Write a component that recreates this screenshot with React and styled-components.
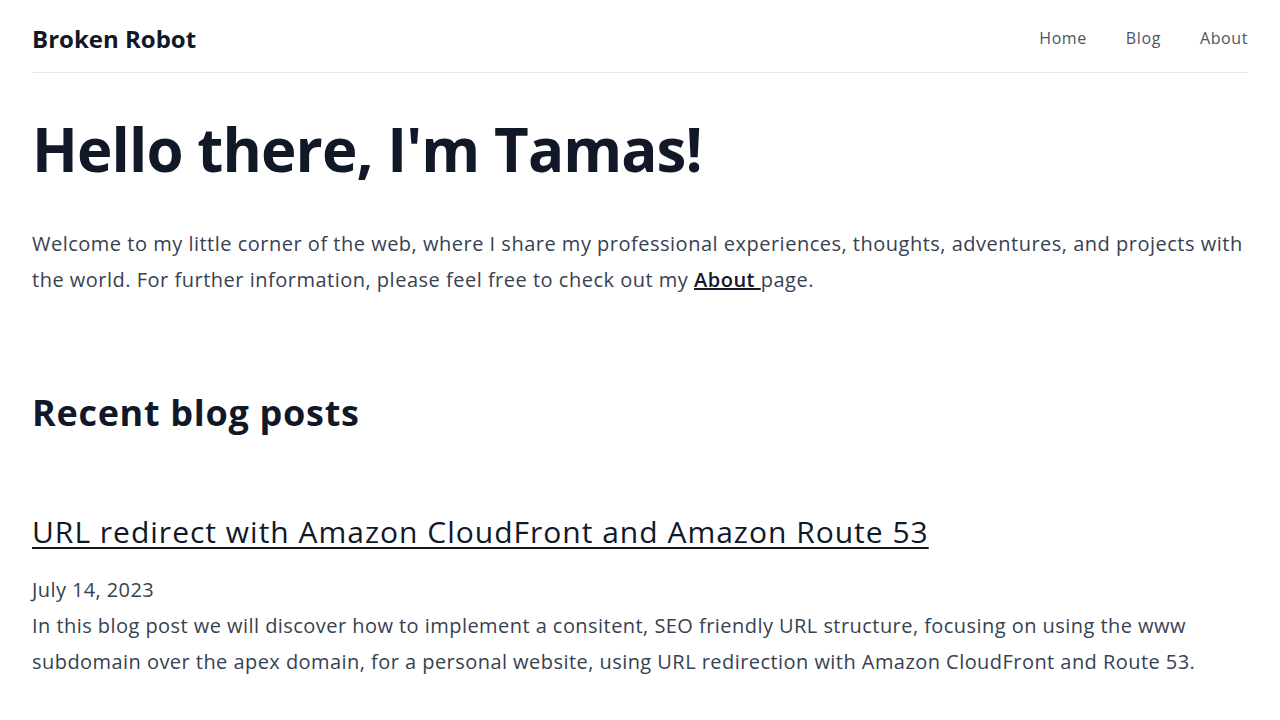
import React from 'react'
import styled, { createGlobalStyle } from 'styled-components'

const GlobalStyle = createGlobalStyle`
  html, body {
    margin: 0;
    padding: 0;
    background: #ffffff;
  }
  body {
    font-family: 'Open Sans', 'Liberation Sans', sans-serif;
    color: #374151;
  }
`

const Page = styled.div`
  padding: 0 32px;
`

const Header = styled.header`
  height: 73px;
  display: flex;
  align-items: center;
  justify-content: space-between;
  border-bottom: 1px solid #e5e7eb;
  padding-top: 4px;
  box-sizing: border-box;
`

const Logo = styled.a`
  font-size: 24px;
  font-weight: 700;
  color: #111827;
  text-decoration: none;
  letter-spacing: 0px;
`

const Nav = styled.nav`
  display: flex;
  gap: 39px;
`

const NavLink = styled.a`
  font-size: 16px;
  color: #4b5563;
  text-decoration: none;
  letter-spacing: 0.6px;
`

const Hero = styled.h1`
  margin: 40px 0 0;
  font-size: 60px;
  line-height: 72px;
  font-weight: 700;
  color: #111827;
  letter-spacing: -0.9px;
`

const Intro = styled.p`
  margin: 41px 0 0;
  font-size: 20px;
  line-height: 36px;
  color: #374151;
  letter-spacing: 0.5px;

  a {
    color: #111827;
    font-weight: 600;
    text-decoration: underline;
  }
`

const SectionTitle = styled.h2`
  margin: 95px 0 0;
  font-size: 36px;
  line-height: 40px;
  font-weight: 700;
  color: #111827;
  letter-spacing: 0.7px;
`

const PostTitle = styled.a`
  display: block;
  margin-top: 81px;
  font-size: 30px;
  line-height: 36px;
  color: #111827;
  text-decoration: underline;
  text-underline-offset: 4px;
  text-decoration-thickness: 2px;
  letter-spacing: 1px;
`

const PostDate = styled.div`
  margin-top: 22px;
  font-size: 20px;
  line-height: 36px;
  color: #374151;
  letter-spacing: 0.4px;
`

const PostSummary = styled.p`
  margin: 0;
  font-size: 20px;
  line-height: 36px;
  color: #374151;
  letter-spacing: 0.45px;
`

const App = () => {
  return (
    <Page>
      <GlobalStyle />
      <Header>
        <Logo href='#'>Broken Robot</Logo>
        <Nav>
          <NavLink href='#'>Home</NavLink>
          <NavLink href='#'>Blog</NavLink>
          <NavLink href='#'>About</NavLink>
        </Nav>
      </Header>
      <main>
        <Hero>Hello there, I'm Tamas!</Hero>
        <Intro>
          Welcome to my little corner of the web, where I share my professional
          experiences, thoughts, adventures, and projects with the world. For
          further information, please feel free to check out my{' '}
          <a href='#'>About </a>page.
        </Intro>
        <SectionTitle>Recent blog posts</SectionTitle>
        <article>
          <PostTitle href='#'>
            URL redirect with Amazon CloudFront and Amazon Route 53
          </PostTitle>
          <PostDate>July 14, 2023</PostDate>
          <PostSummary>
            In this blog post we will discover how to implement a consitent,
            SEO friendly URL structure, focusing on using the www subdomain
            over the apex domain, for a personal website, using URL redirection
            with Amazon CloudFront and Route 53.
          </PostSummary>
        </article>
      </main>
    </Page>
  )
}

export default App
